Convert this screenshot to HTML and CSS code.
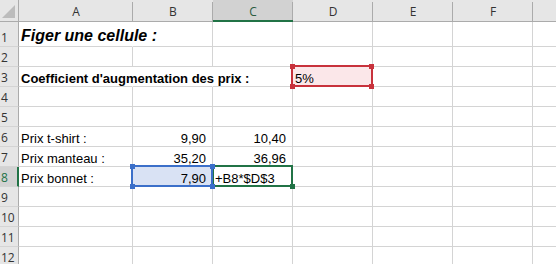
FILE: index.html
```html
<!DOCTYPE html>
<html lang="fr">
<head>
<meta charset="utf-8">
<title>Figer une cellule</title>
<link rel="stylesheet" href="styles.css">
</head>
<body>
<div class="sheet">
  <div class="row hdr">
    <div class="corner"><svg width="19" height="22" viewBox="0 0 19 22"><polygon points="15,5 15,18 2,18" fill="#bcbcbc"/></svg></div>
    <div class="ch">A</div>
    <div class="ch">B</div>
    <div class="ch sel">C</div>
    <div class="ch">D</div>
    <div class="ch">E</div>
    <div class="ch">F</div>
    <div class="ch"></div>
  </div>
  <div class="row r1">
    <div class="rh">1</div>
    <div class="c nr title">Figer une cellule :</div>
    <div class="c"></div><div class="c"></div><div class="c"></div><div class="c"></div><div class="c"></div><div class="c"></div>
  </div>
  <div class="row">
    <div class="rh">2</div>
    <div class="c"></div><div class="c"></div><div class="c"></div><div class="c"></div><div class="c"></div><div class="c"></div><div class="c"></div>
  </div>
  <div class="row">
    <div class="rh">3</div>
    <div class="c nr bold">Coefficient d'augmentation des prix :</div>
    <div class="c nr"></div>
    <div class="c"></div>
    <div class="c fill-red">5%</div>
    <div class="c"></div><div class="c"></div><div class="c"></div>
  </div>
  <div class="row">
    <div class="rh">4</div>
    <div class="c"></div><div class="c"></div><div class="c"></div><div class="c"></div><div class="c"></div><div class="c"></div><div class="c"></div>
  </div>
  <div class="row">
    <div class="rh">5</div>
    <div class="c"></div><div class="c"></div><div class="c"></div><div class="c"></div><div class="c"></div><div class="c"></div><div class="c"></div>
  </div>
  <div class="row">
    <div class="rh">6</div>
    <div class="c">Prix t-shirt :</div>
    <div class="c num">9,90</div>
    <div class="c num">10,40</div>
    <div class="c"></div><div class="c"></div><div class="c"></div><div class="c"></div>
  </div>
  <div class="row">
    <div class="rh">7</div>
    <div class="c">Prix manteau :</div>
    <div class="c num">35,20</div>
    <div class="c num">36,96</div>
    <div class="c"></div><div class="c"></div><div class="c"></div><div class="c"></div>
  </div>
  <div class="row">
    <div class="rh rsel">8</div>
    <div class="c">Prix bonnet :</div>
    <div class="c num fill-blue">7,90</div>
    <div class="c">+B8*$D$3</div>
    <div class="c"></div><div class="c"></div><div class="c"></div><div class="c"></div>
  </div>
  <div class="row">
    <div class="rh">9</div>
    <div class="c"></div><div class="c"></div><div class="c"></div><div class="c"></div><div class="c"></div><div class="c"></div><div class="c"></div>
  </div>
  <div class="row">
    <div class="rh">10</div>
    <div class="c"></div><div class="c"></div><div class="c"></div><div class="c"></div><div class="c"></div><div class="c"></div><div class="c"></div>
  </div>
  <div class="row">
    <div class="rh">11</div>
    <div class="c"></div><div class="c"></div><div class="c"></div><div class="c"></div><div class="c"></div><div class="c"></div><div class="c"></div>
  </div>
  <div class="row">
    <div class="rh">12</div>
    <div class="c"></div><div class="c"></div><div class="c"></div><div class="c"></div><div class="c"></div><div class="c"></div><div class="c"></div>
  </div>

  <div class="ref ref-red"></div>
  <div class="hd hd-red" style="left:290px;top:64px"></div>
  <div class="hd hd-red" style="left:369px;top:64px"></div>
  <div class="hd hd-red" style="left:290px;top:84px"></div>
  <div class="hd hd-red" style="left:369px;top:84px"></div>

  <div class="ref ref-green"></div>
  <div class="hd hd-green" style="left:290px;top:184px"></div>

  <div class="ref ref-blue"></div>
  <div class="hd hd-blue" style="left:130px;top:164px"></div>
  <div class="hd hd-blue" style="left:210px;top:164px"></div>
  <div class="hd hd-blue" style="left:130px;top:184px"></div>
  <div class="hd hd-blue" style="left:210px;top:184px"></div>
</div>
</body>
</html>
```
FILE: styles.css
```css
* { box-sizing: border-box; margin: 0; padding: 0; }
html, body { margin: 0; width: 556px; height: 264px; overflow: hidden; background: #fff; }
body { font-family: "Liberation Sans", Arial, sans-serif; font-size: 13px; color: #000; }

.sheet { position: relative; width: 613px; }

.row {
  display: grid;
  grid-template-columns: 19px 114px 80px 80px 80px 80px 80px 80px;
  height: 20px;
}
.r1 { height: 25px; }
.hdr { height: 22px; }

.corner {
  background: #e6e6e6;
  border-right: 1px solid #ababab;
  border-bottom: 1px solid #ababab;
  overflow: hidden;
}
.corner svg { display: block; }

.ch {
  background:
    linear-gradient(#ababab, #ababab) right 2px / 1px calc(100% - 2px) no-repeat,
    #e6e6e6;
  border-bottom: 1px solid #ababab;
  display: flex;
  align-items: center;
  justify-content: center;
  font-family: "Open Sans", "Noto Sans", sans-serif;
  font-size: 12px;
  color: #333;
  padding-top: 1px;
}
.ch.sel {
  background:
    linear-gradient(#ababab, #ababab) right 2px / 1px calc(100% - 2px) no-repeat,
    #d2d2d2;
  border-bottom: 2px solid #217346;
  color: #2a5a3e;
  padding-top: 2px;
}

.rh {
  background: #e6e6e6;
  border-right: 1px solid #ababab;
  border-bottom: 1px solid #d4d4d4;
  display: flex;
  align-items: flex-end;
  padding-left: 1px;
  font-family: "Open Sans", "Noto Sans", sans-serif;
  font-size: 12px;
  line-height: 16px;
  color: #333;
  white-space: nowrap;
}
.rh.rsel {
  background: #d2d2d2;
  border-right: 2px solid #217346;
  color: #217346;
}

.c {
  border-right: 1px solid #d4d4d4;
  border-bottom: 1px solid #d4d4d4;
  display: flex;
  align-items: flex-end;
  padding: 0 2px;
  white-space: nowrap;
  line-height: 15px;
}
.c.nr { border-right-color: transparent; }
.num { justify-content: flex-end; padding-right: 6px; }
.bold { font-weight: bold; }
.title {
  font-weight: bold;
  font-style: italic;
  font-size: 16px;
  line-height: 19px;
  padding-bottom: 1px;
}
.fill-red { background: #fbe7e9; }
.fill-blue { background: #d9e2f4; }

.ref { position: absolute; border: 2px solid; }
.ref-red { left: 291px; top: 65px; width: 82px; height: 22px; border-color: #c8323c; }
.ref-blue { left: 131px; top: 165px; width: 82px; height: 22px; border-color: #3b6fc9; }
.ref-green { left: 212px; top: 165px; width: 81px; height: 22px; border-color: #217346; }

.hd { position: absolute; width: 5px; height: 5px; }
.hd-red { background: #c8323c; }
.hd-blue { background: #3b6fc9; }
.hd-green { background: #217346; }
```
